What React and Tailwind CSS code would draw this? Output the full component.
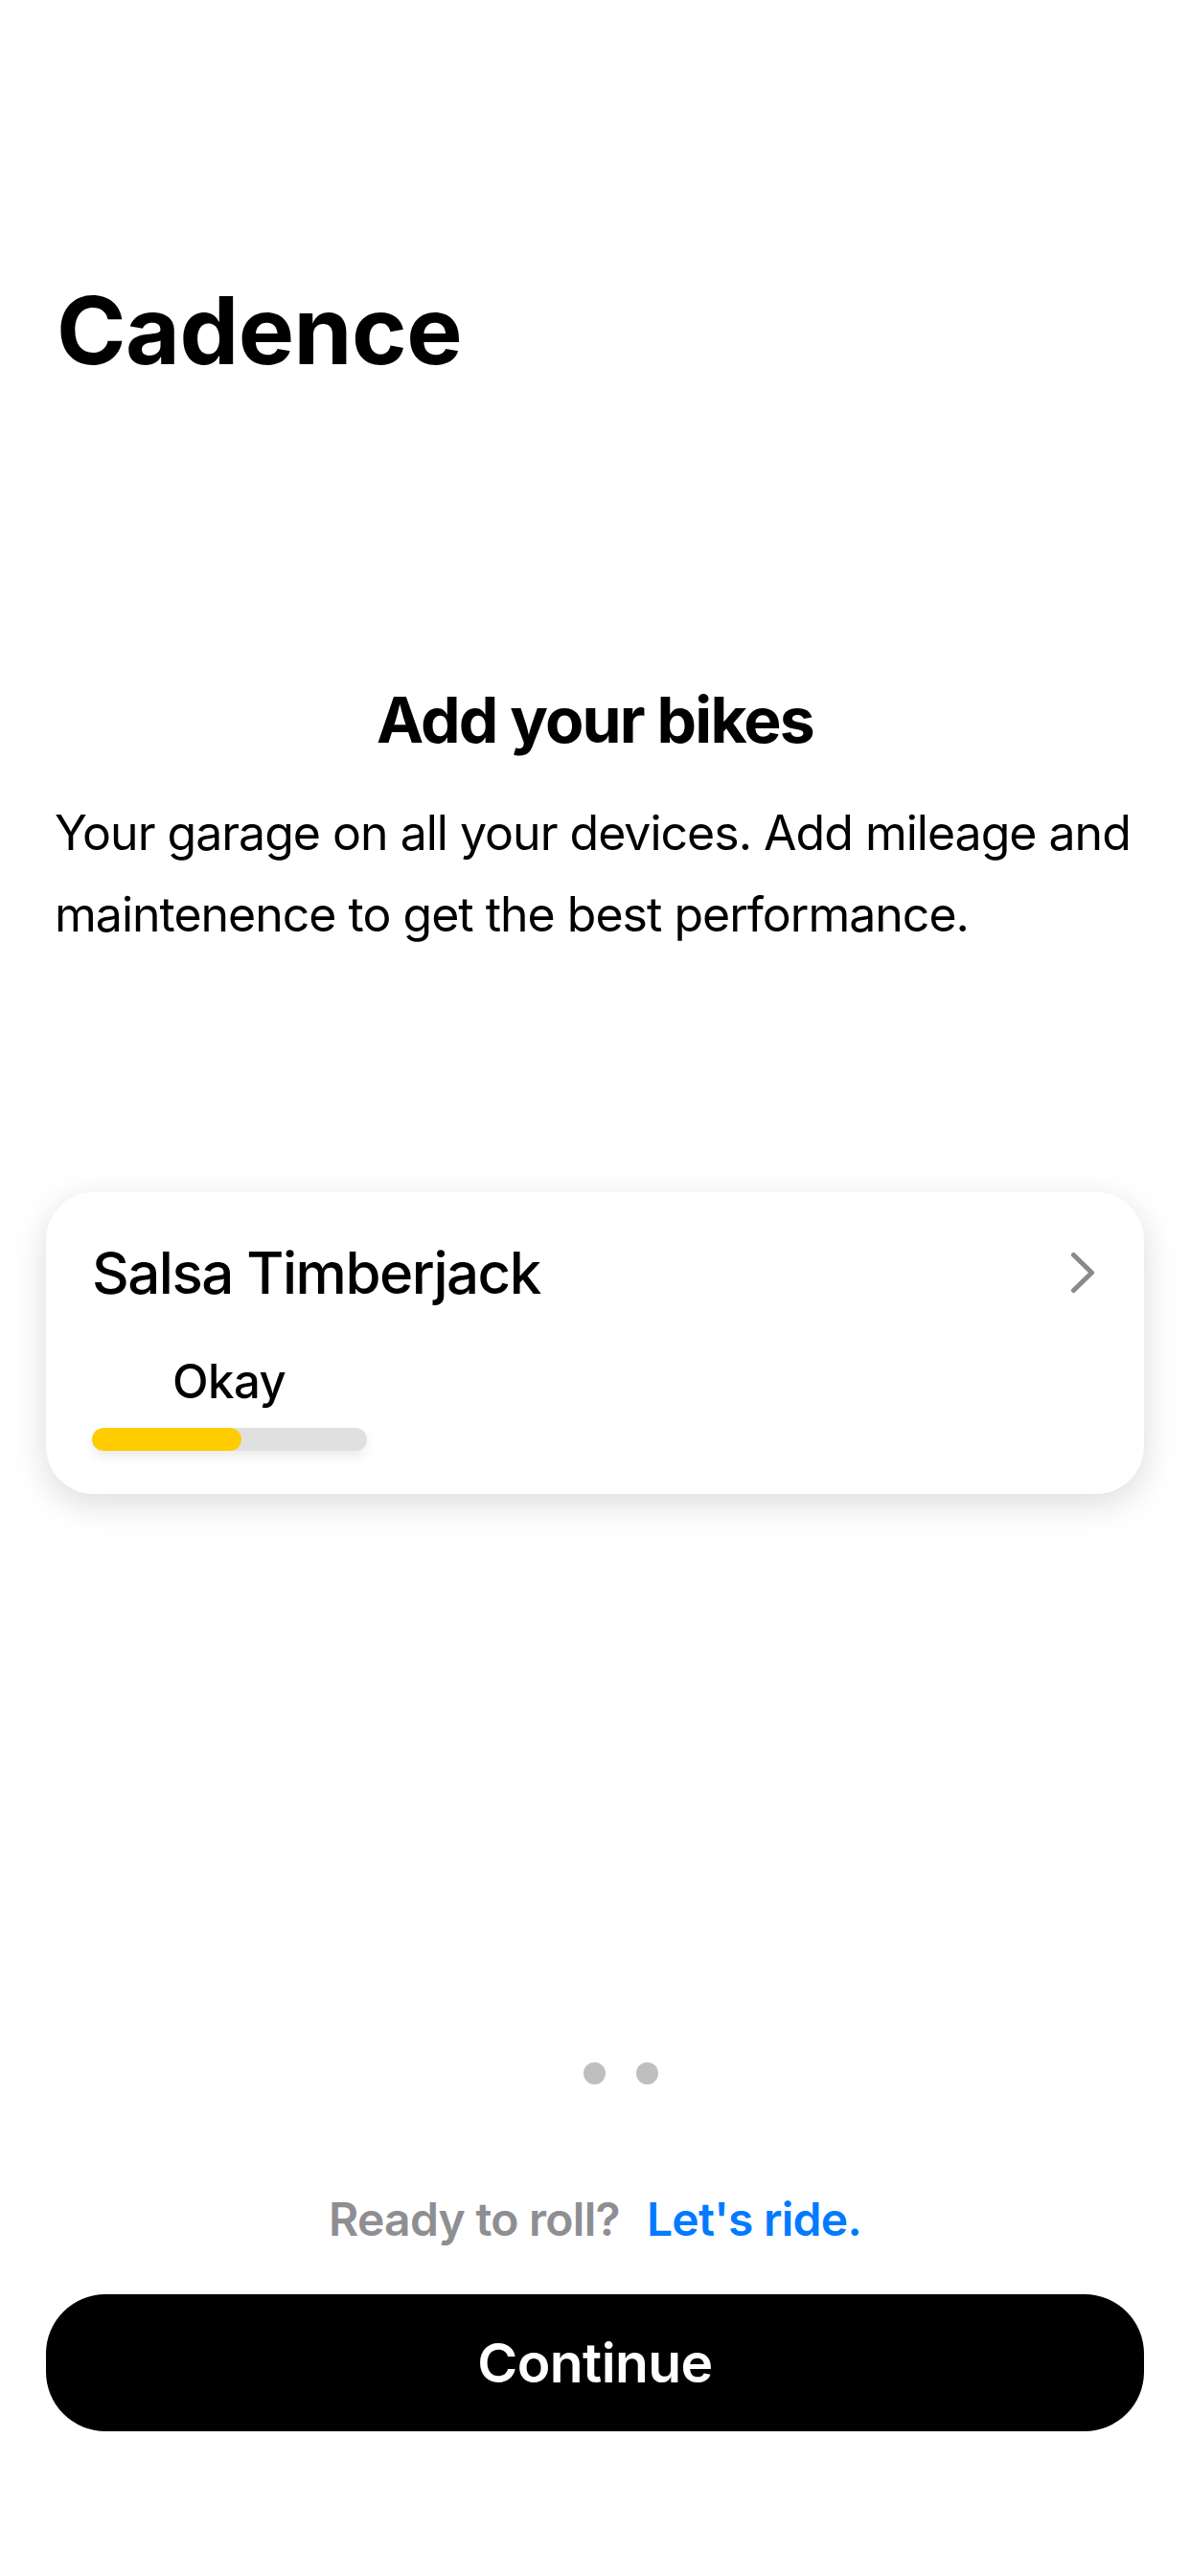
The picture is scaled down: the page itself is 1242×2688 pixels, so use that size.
import React from "react";

export default function App() {
  return (
    <div
      className="w-[1242px] h-[2688px] bg-white flex flex-col text-black overflow-hidden"
      style={{ fontFamily: "Inter, 'Noto Sans', sans-serif" }}
    >
      {/* Large title */}
      <div className="pt-[296px] pl-[59px]">
        <h1 className="text-[98px] leading-none font-bold tracking-[-0.005em]">Cadence</h1>
      </div>

      {/* Heading */}
      <h2 className="mt-[324px] text-center text-[66px] leading-none font-bold tracking-[-0.028em]">
        Add your bikes
      </h2>

      {/* Body */}
      <p className="mt-[43px] px-[57px] text-[50px] leading-[85px] font-normal tracking-[-0.02em] whitespace-nowrap">
        Your garage on all your devices. Add mileage and
        <br />
        maintenence to get the best performance.
      </p>

      {/* Bike card */}
      <div className="mt-[247px] mx-[48px] h-[315px] rounded-[50px] bg-white shadow-[0_10px_36px_rgba(0,0,0,0.14)] pt-[54px] pl-[48px] pr-[52px] flex flex-col">
        <div className="flex items-start justify-between">
          <span className="text-[60px] leading-none font-medium tracking-[-0.025em]">Salsa Timberjack</span>
          <svg width="24" height="42" viewBox="0 0 24 42" className="mt-[9px]" fill="none">
            <polyline
              points="2.5,2.5 21.5,21 2.5,39.5"
              stroke="#8a8a8e"
              strokeWidth="5"
              strokeLinecap="round"
              strokeLinejoin="round"
            />
          </svg>
        </div>
        <div className="mt-[59px] pl-[84px]">
          <span className="text-[49px] leading-none font-medium tracking-[-0.01em]">Okay</span>
        </div>
        <div className="mt-[24px] w-[287px] h-[24px] rounded-full bg-[#e0e0e0] shadow-[0_6px_12px_rgba(0,0,0,0.08)] flex overflow-hidden">
          <div className="w-[156px] h-full rounded-full bg-[#ffcc00]" />
        </div>
      </div>

      {/* Page dots */}
      <div className="mt-[593px] flex justify-center gap-[32px] pl-[53px]">
        <div className="w-[23px] h-[23px] rounded-full bg-[#bfbfbf]" />
        <div className="w-[23px] h-[23px] rounded-full bg-[#bfbfbf]" />
      </div>

      {/* Prompt */}
      <div className="mt-[117px] flex justify-center text-[48px] leading-none font-semibold tracking-[-0.015em]">
        <span className="text-[#8e8e93]">Ready to roll?</span>
        <span className="ml-[28px] text-[#007aff]">Let's ride.</span>
      </div>

      {/* Continue button */}
      <button className="mt-[54px] mx-[48px] h-[143px] rounded-[62px] bg-black text-white text-[57px] font-semibold tracking-[-0.01em] flex items-center justify-center">
        Continue
      </button>
    </div>
  );
}
